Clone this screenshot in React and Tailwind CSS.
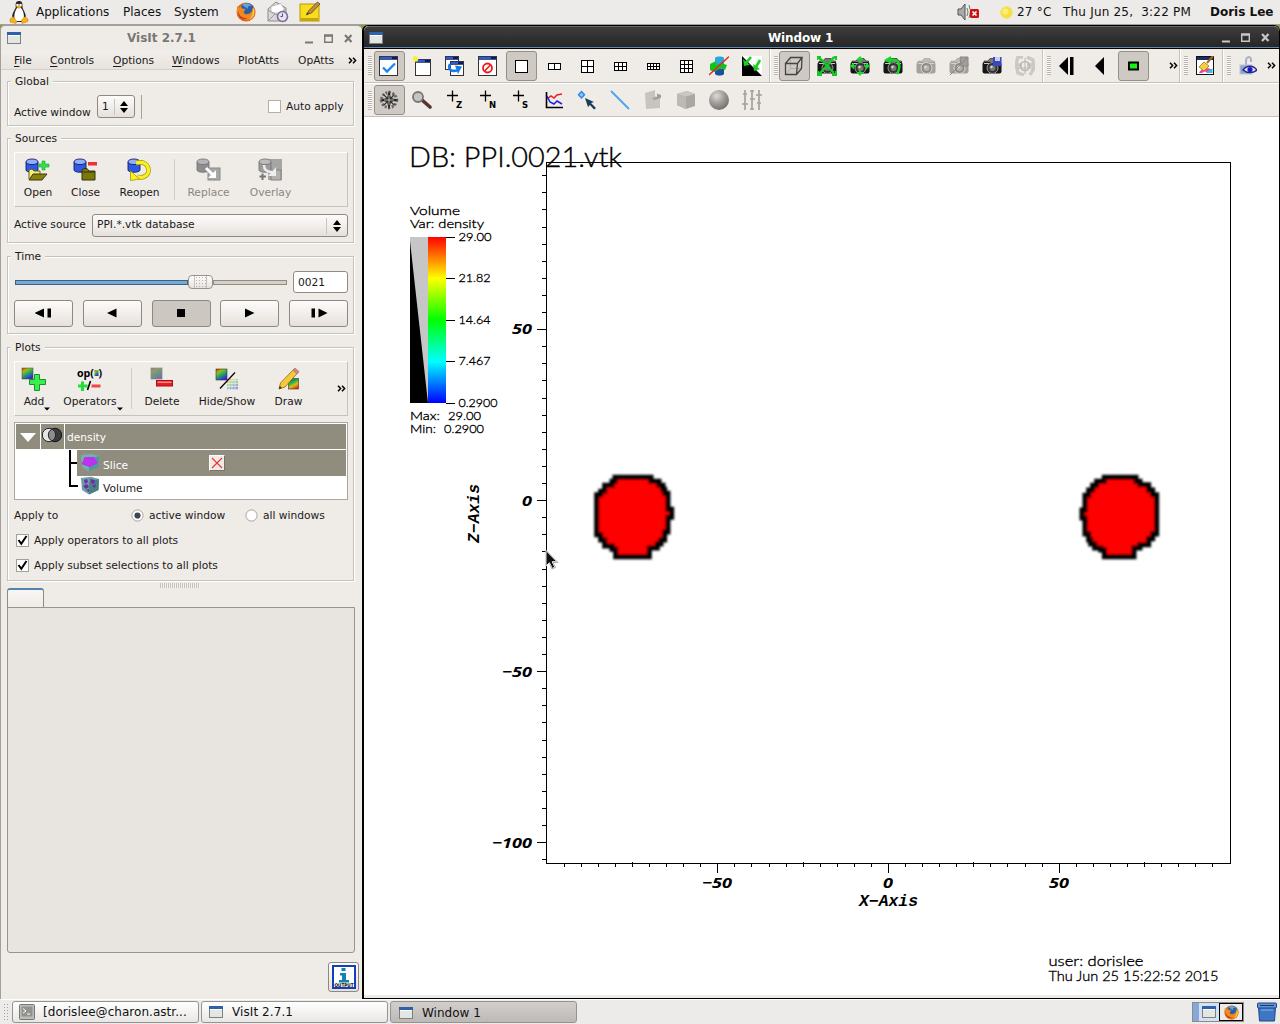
import React from "react";

const UI = "font-['DejaVu_Sans',sans-serif]";

/* ---------- small shared pieces ---------- */

const Svg = ({ s = 20, w, h, vb, children, className = "" }) => (
  <svg width={w || s} height={h || s} viewBox={vb || `0 0 ${w || s} ${h || s}`} className={`block shrink-0 ${className}`}>
    {children}
  </svg>
);

const Group = ({ title, className = "", children }) => (
  <section className={`ml-[6px] w-[347px] shrink-0 border border-[#c6c2bc] shadow-[1px_1px_0_#ffffff,inset_1px_1px_0_#ffffff] ${className}`}>
    <div className="-mt-[9px] ml-[3px] flex h-4 w-fit items-center bg-[#efebe7] px-1 pt-[2px]">{title}</div>
    {children}
  </section>
);

const Frame = ({ className = "", children }) => (
  <div className={`ml-[6px] flex h-[55px] w-[334px] border border-t-white border-r-[#c6c2bc] border-b-[#c6c2bc] border-l-white ${className}`}>
    {children}
  </div>
);

const Tool = ({ label, className, children, off, menu }) => (
  <div className={`flex shrink-0 flex-col items-center pt-[5px] ${className}`}>
    <div className="h-[25px]">{children}</div>
    <div className={`relative mt-[2px] flex h-[17px] items-center whitespace-nowrap ${off ? "text-[#8a8782]" : ""}`}>
      {label}
      {menu && (
        <svg className="absolute -right-[6px] bottom-0" width="6" height="4"><path d="M0 0.5H6L3 3.5Z" fill="#000" /></svg>
      )}
    </div>
  </div>
);

const More = ({ className = "" }) => (
  <Svg w={9} h={7} className={className}>
    <path d="M1 .8L3.6 3.5L1 6.2M5 .8L7.6 3.5L5 6.2" fill="none" stroke="#000" strokeWidth="1.5" />
  </Svg>
);

const UpDown = () => (
  <Svg w={8} h={12}><path d="M0 5L4 0L8 5ZM0 7H8L4 12Z" fill="#000" /></Svg>
);

const WinIcon = () => (
  <Svg w={14} h={12}>
    <rect x=".5" y=".5" width="13" height="11" fill="#e4e6e1" stroke="#7d8083" />
    <rect x="1" y="3" width="12" height="1" fill="#fff" />
    <rect width="14" height="3" fill="#2d62a8" />
  </Svg>
);

const WinButtons = ({ c }) => (
  <Svg w={56} h={12}>
    <path d="M4 10.500H12" stroke={c} strokeWidth="2" />
    <path d="M23.700 3H31.300V10.300H23.700ZM23 4H32" fill="none" stroke={c} strokeWidth="1.4" />
    <path d="M44 3L50.500 10M50.500 3L44 10" stroke={c} strokeWidth="2.2" />
  </Svg>
);

const BTN = "border border-[#8d8880] rounded-[3px] bg-linear-to-b from-[#fdfcfb] to-[#e6e0db]";

/* ---------- top panel icons ---------- */

const Tux = () => (
  <Svg w={20} h={24}>
    <path d="M10 1C6.500 1 6.500 4 6.800 7C6 10 3 13 3 18L6 22H14L17 18C17 13 14 10 13.500 7C13.700 3 13 1 10 1Z" fill="#222" />
    <path d="M8 8C5.500 12 4.500 16 6 21H14C16 16 14.500 11 12 8Z" fill="#fff" />
    <circle cx="8.500" cy="5" r="1.300" fill="#fff" /><circle cx="11.500" cy="5" r="1.300" fill="#fff" />
    <path d="M7 6.500L10 5.500L13 6.500L10 9Z" fill="#f6a91b" />
    <path d="M1 19L4 16.500L8 21.500L7 23.500L1 22ZM19 19L16 16.500L12.500 20L13 23.500L19 21.500Z" fill="#f7b11c" stroke="#c77f0c" strokeWidth=".5" />
  </Svg>
);

const Firefox = ({ s = 20 }) => (
  <Svg s={s} vb="0 0 20 20">
    <circle cx="10" cy="10" r="9.500" fill="#e0621a" />
    <circle cx="11" cy="8" r="7" fill="#2a5ea8" />
    <path d="M6 3C9 0 14 1 16 4C13 3 11 5 12 7Z" fill="#5fa3d8" />
    <path d="M1 4L3.500 6L5 4L6 6.500L9.500 7L8 9.500C7 11 9 13 12 12C15 11.500 16.500 9 16.500 6C19 9 18 14 15 16.500C10 20 3 18 1.500 12C.5 9 1 6 1 4Z" fill="#f08a1c" />
    <path d="M17 5C20 10 18 16 13 18C16 15 17 12 17 5Z" fill="#f9d63c" />
    <path d="M2 9C3 14 7 17 12 16C8 19 3 17 2 12Z" fill="#c8371a" />
  </Svg>
);

const Mail = () => (
  <Svg w={22} h={22}>
    <path d="M1 8L9 1L19 7V20H1Z" fill="#d8d8d6" stroke="#8b8b89" />
    <path d="M4 5.500L14 2.500L17 8V12H4Z" fill="#fff" stroke="#aaa" strokeWidth=".6" />
    <path d="M1 9L10 14L19 8M1 20L8 13" fill="none" stroke="#999" />
    <circle cx="15.500" cy="15.500" r="5" fill="#e8e2ee" stroke="#7e6a9c" strokeWidth="1.600" />
    <path d="M15.500 12.500V15.500H13.500" fill="none" stroke="#555" />
  </Svg>
);

const Note = () => (
  <Svg w={22} h={22}>
    <rect x="1" y="3" width="19" height="17" fill="#f7dd1d" stroke="#b79a05" />
    <rect x="2" y="17" width="17" height="3" fill="#c9a50a" />
    <path d="M8 13L10 9.500L18.500 1L21 3L12.500 12Z" fill="#c98b43" stroke="#5c4022" strokeWidth=".8" />
    <path d="M7 14.500L8 11.500L10 13Z" fill="#333" />
  </Svg>
);

const TopPanel = () => (
  <header className="flex h-[25px] shrink-0 items-center border-b border-[#a3a09c] bg-[#edebe9] text-[12px] text-[#111] whitespace-nowrap">
    <div className="ml-[9px] w-[27px]"><Tux /></div>
    <div className="w-[87px]">Applications</div>
    <div className="w-[51px]">Places</div>
    <div className="w-[62px]">System</div>
    <div className="w-[31px]"><Firefox /></div>
    <div className="w-[32px]"><Mail /></div>
    <Note />
    <div className="flex-1" />
    <Svg w={22} h={20}>
      <path d="M1 7H4L8 2V18L4 13H1Z" fill="#aaa" stroke="#555" />
      <path d="M10 6Q12 10 10 14M12 3Q15 9 12 16" fill="none" stroke="#777" />
      <rect x="13" y="7" width="9" height="9" rx="1.500" fill="#cc1111" />
      <path d="M15.500 9.500L19.500 13.500M19.500 9.500L15.500 13.500" stroke="#fff" strokeWidth="1.600" />
    </Svg>
    <Svg s={13} className="ml-[21px]"><circle cx="6.500" cy="6.500" r="6" fill="#f7dd3e" stroke="#f1e48c" /><circle cx="5.500" cy="5.500" r="3" fill="#fcef76" /></Svg>
    <div className="ml-[4px] w-[46px] tracking-[0.2px]">27 °C</div>
    <div className="w-[147px] tracking-[0.2px] whitespace-pre">Thu Jun 25,  3:22 PM</div>
    <div className="w-[70px] font-bold">Doris Lee</div>
  </header>
);

/* ---------- left window icons ---------- */

const Cyl = ({ a = "#2f58e4", b = "#8fb0ff", c = "#12205e" }) => (
  <>
    <path d="M1 4V12C1 15 13 15 13 12V4Z" fill={a} stroke={c} strokeWidth=".9" />
    <ellipse cx="7" cy="3.800" rx="6" ry="2.800" fill={b} stroke={c} strokeWidth=".9" />
  </>
);
const OpenIcon = () => (
  <Svg w={26} h={24}>
    <Cyl />
    <path d="M4 21V12L7 11L9 13H15V16" fill="#f5ee7a" stroke="#6a6410" />
    <path d="M4 22L8 16H22L17 22Z" fill="#85800f" stroke="#3c3905" />
    <path d="M17 3H20V6H24V9H20V12H17V9H14V6H17Z" fill="#35e04a" stroke="#17a52b" strokeWidth=".6" />
  </Svg>
);
const CloseIcon = () => (
  <Svg w={26} h={24}>
    <Cyl />
    <path d="M9 22V12L11 10.500H14L16 13H22V22Z" fill="#7b7808" stroke="#37350a" />
    <path d="M9 14H22" stroke="#37350a" />
    <rect x="15" y="4" width="9" height="3.500" fill="#ee3038" />
  </Svg>
);
const ReopenIcon = () => (
  <Svg w={26} h={24}>
    <Cyl />
    <path d="M9 5C16 3 21 6 21.500 11.500C22 18 15 21 9.500 18.500" fill="none" stroke="#a39b00" strokeWidth="4.600" />
    <path d="M9 5C16 3 21 6 21.500 11.500C22 18 15 21 9.500 18.500" fill="none" stroke="#fcee21" strokeWidth="3.200" />
    <path d="M3.500 22.500V13L12.500 21Z" fill="#fcee21" stroke="#a39b00" strokeWidth=".8" />
  </Svg>
);
const ReplaceIcon = () => (
  <Svg w={26} h={24}>
    <Cyl a="#8d8d8d" b="#b5b5b5" c="#777" />
    <rect x="12" y="10" width="12" height="12" fill="#a8a8a6" stroke="#8a8a88" />
    <path d="M10 10L17 17" stroke="#fff" strokeWidth="3" /><path d="M20 12V20H12Z" fill="#fff" />
  </Svg>
);
const OverlayIcon = () => (
  <Svg w={26} h={24}>
    <rect x="10" y="1" width="14" height="21" fill="#a5a5a3" />
    <Cyl a="#9c9c9c" b="#bcbcbc" c="#777" />
    <rect x="13" y="12" width="10" height="10" fill="#b2b2b0" stroke="#858583" />
    <path d="M6 7C6 12 9 14 14 14" fill="none" stroke="#eee" strokeWidth="2.400" /><path d="M18 9V18H10Z" fill="#eee" />
    <path d="M4.500 15.500V22M1.500 18.500H8" stroke="#777" strokeWidth="2" />
  </Svg>
);

const RainbowDefs = () => (
  <svg width="0" height="0" className="absolute">
    <defs>
      <linearGradient id="rb3" x1="0" y1="0" x2=".6" y2="1">
        <stop offset="0" stopColor="#e82a0c" /><stop offset=".3" stopColor="#9ac010" /><stop offset=".6" stopColor="#20a860" /><stop offset="1" stopColor="#4020e8" />
      </linearGradient>
      <linearGradient id="rb4" x1=".2" y1="0" x2=".7" y2="1">
        <stop offset="0" stopColor="#1840e0" /><stop offset=".35" stopColor="#18b048" /><stop offset=".65" stopColor="#d8c010" /><stop offset="1" stopColor="#e83010" />
      </linearGradient>
    </defs>
  </svg>
);

const PlusShape = ({ t }) => (
  <path transform={t} d="M5 0H10V5H16V10H10V16H5V10H0V5H5Z" fill="#3bee4c" stroke="#15952a" />
);
const AddIcon = () => (
  <Svg w={26} h={25}><rect x="1" y="1" width="11" height="11" fill="url(#rb3)" stroke="#444" strokeWidth=".5" /><PlusShape t="translate(8.500 7.500)" /></Svg>
);
const OpIcon = () => (
  <Svg w={28} h={25}>
    <rect x="18.500" y="3" width="4" height="6" fill="url(#rb3)" />
    <text x="1" y="10" fontSize="10.500" fontWeight="bold" textLength="17" lengthAdjust="spacingAndGlyphs" fontFamily="Open Sans, sans-serif">op(</text>
    <text x="22.500" y="10" fontSize="10.500" fontWeight="bold" fontFamily="Open Sans, sans-serif">)</text>
    <path d="M5 14.500H8V17.500H11.500V20.500H8V24H5V20.500H2V17.500H5Z" fill="#22dd3a" />
    <path d="M11.500 23L14.500 14" stroke="#000" strokeWidth="1.600" />
    <rect x="15.500" y="17.500" width="9" height="3" fill="#f0464a" />
  </Svg>
);
const DeleteIcon = () => (
  <Svg w={26} h={25}>
    <rect x="2" y="1" width="11" height="11" fill="url(#rb3)" /><rect x="1.500" y=".5" width="12" height="12" fill="#8a8f8c" opacity=".75" />
    <rect x="7.500" y="13.500" width="16" height="5.500" fill="#ee1c20" stroke="#a41014" /><rect x="8.500" y="14.500" width="14" height="1.500" fill="#f98a8a" />
  </Svg>
);
const HideIcon = () => (
  <Svg w={26} h={25}>
    <rect x="2" y="2" width="11" height="11" fill="url(#rb3)" stroke="#333" strokeWidth=".6" />
    <rect x="13" y="12" width="11" height="11" fill="url(#rb3)" opacity=".45" />
    <path d="M13 13.500H24M13 16.500H24M13 19.500H24M13 22.500H24M15 12V23M18 12V23M21 12V23" stroke="#eee" strokeWidth=".7" />
    <path d="M6 21.500L21 5.500" stroke="#000" strokeWidth="1.200" />
  </Svg>
);
const DrawIcon = () => (
  <Svg w={26} h={25}>
    <rect x="12.500" y="11.500" width="10" height="10.500" fill="url(#rb4)" stroke="#333" strokeWidth=".6" />
    <path d="M3 22L4.500 16L18 2L22 5.500L9 20Z" fill="#f5c93c" stroke="#9c7414" strokeWidth=".9" />
    <path d="M17 3L19 1L23 4.500L21 7Z" fill="#e08088" stroke="#777" strokeWidth=".6" />
    <path d="M3 22L3.800 19L5.800 21Z" fill="#222" />
  </Svg>
);
const CubeIcon = ({ vol }) => (
  <Svg w={20} h={20}>
    <path d="M1 2L11 .8L19 3L18.500 14L9 18.500L2 14Z" fill={vol ? "#6f9da4" : "#74aeb0"} />
    <path d="M9 6V18.500L18.500 14L19 3Z" fill={vol ? "#4b8084" : "#4f989b"} />
    {vol
      ? <path d="M4 4L7 3L8 6L5 8ZM10 3L15 4L14 8L11 7ZM3 10L7 8L9 11L6 13ZM12 10L16 8L15 12ZM6 14L9 13V16Z" fill="#6a2fa8" />
      : <><path d="M2 11L5 4L9 7L10 14Z" fill="#b0139f" /><path d="M5 4H14L18 10L10 14L2 11Z" fill="#bb33f0" /></>}
  </Svg>
);

const Check = () => (
  <span className="flex h-[13px] w-[13px] items-center justify-center border border-[#a59f98] bg-white">
    <Svg s={11}><path d="M1.500 5L4.300 8.800L9.500 1" fill="none" stroke="#000" strokeWidth="2" /></Svg>
  </span>
);
const Radio = ({ on }) => (
  <Svg s={13}>
    <circle cx="6.500" cy="6.500" r="5.600" fill="#fff" stroke="#a8a29b" />
    {on && <circle cx="6.500" cy="6.500" r="3.100" fill="#3d4750" />}
  </Svg>
);

const PB = ({ d, on }) => (
  <div className={`flex h-[27px] w-[59px] items-center justify-center pb-px ${on ? "rounded-[3px] border border-[#8d8880] bg-[#cdc7c1]" : BTN}`}>
    <Svg w={18} h={10}><path d={d} fill="#000" /></Svg>
  </div>
);

const MenuItem = ({ w, children, u = true }) => (
  <div className={`shrink-0 pt-[3px] ${w}`}>
    {u ? <><span className="underline underline-offset-2">{children[0]}</span>{children.slice(1)}</> : children}
  </div>
);

const ControlWindow = () => (
  <div className="flex w-[362px] shrink-0 flex-col rounded-t-[5px] border-t border-l border-[#a3a09c] bg-[#efebe7] text-[10.67px] leading-none text-[#1a1a1a] whitespace-nowrap">
    <div className="flex h-[24px] items-center pl-[6px]">
      <WinIcon />
      <div className="ml-[43px] w-[194px] pl-[63px] text-[12px] font-bold text-[#7a7774]">VisIt 2.7.1</div>
      <div className="ml-[43px]"><WinButtons c="#7a7774" /></div>
    </div>
    <div className="flex h-[20px] items-center border-b border-[#d3cec9] bg-linear-to-b from-[#f1eeeb] to-[#e8e3de] pl-[13px]">
      <MenuItem w="w-[36px]">File</MenuItem>
      <MenuItem w="w-[63px]">Controls</MenuItem>
      <MenuItem w="w-[59px]">Options</MenuItem>
      <MenuItem w="w-[66px]">Windows</MenuItem>
      <MenuItem w="w-[60px]" u={false}>PlotAtts</MenuItem>
      <MenuItem w="w-[50px]" u={false}>OpAtts</MenuItem>
      <More className="mt-px" />
    </div>

    <Group title="Global" className="mt-[11px] h-[45px]">
      <div className="flex pl-[6px] pt-[6px]">
        <div className="w-[83px] pt-[13px]">Active window</div>
        <div className={`flex h-[23px] w-[38px] items-center ${BTN}`}>
          <span className="w-[15px] pt-[2px] pl-[4px]">1</span>
          <span className="ml-[1px] mr-[5px] h-4 w-px bg-[#c9c4be]" />
          <UpDown />
        </div>
        <div className="ml-[6px] h-[24px] w-px bg-[#a5a09a]" />
        <div className="ml-[126px] mt-[5px] h-[13px] w-[13px] border border-[#b5afa8] bg-white" />
        <div className="ml-[5px] pt-[7px]">Auto apply</div>
      </div>
    </Group>

    <Group title="Sources" className="mt-[12px] h-[105px]">
      <Frame className="mt-[6px]">
        <Tool label="Open" className="w-[46px]"><OpenIcon /></Tool>
        <Tool label="Close" className="w-[49px]"><CloseIcon /></Tool>
        <Tool label="Reopen" className="w-[59px]"><ReopenIcon /></Tool>
        <div className="ml-[5px] mt-[6px] h-[41px] w-px bg-[#d2cdc8]" />
        <Tool off label="Replace" className="w-[67px]"><ReplaceIcon /></Tool>
        <Tool off label="Overlay" className="w-[57px]"><OverlayIcon /></Tool>
      </Frame>
      <div className="ml-[6px] mt-[7px] flex h-[23px] items-center">
        <div className="w-[78px]">Active source</div>
        <div className={`flex h-[23px] w-[256px] items-center ${BTN}`}>
          <div className="flex-1 pl-[4px]">PPI.*.vtk database</div>
          <div className="mr-[6px] h-4 w-px bg-[#c9c4be]" />
          <UpDown />
          <div className="w-[6px]" />
        </div>
      </div>
    </Group>

    <Group title="Time" className="mt-[13px] h-[78px]">
      <div className="ml-[7px] mt-[7px] flex h-[22px] items-center">
        <div className="h-[5px] w-[173px] border border-[#3b6283] bg-[#76a9d8]" />
        <div className="flex h-[14px] w-[25px] items-center justify-center rounded-[4px] border border-[#96918a] bg-linear-to-b from-white to-[#e6e1dc]">
          <div className="h-[12px] w-[13px] border-x border-[#c6c1bb] bg-[radial-gradient(circle,#b5b0aa_0.7px,transparent_1px)] bg-[size:3px_3px]" />
        </div>
        <div className="h-[5px] w-[74px] border border-[#938c82] bg-[#d6cfc5]" />
        <div className="ml-[6px] flex h-[22px] w-[55px] items-center rounded-[3px] border border-[#938c85] bg-white pt-[2px] pl-[4px]">0021</div>
      </div>
      <div className="ml-[6px] mt-[7px] flex w-[334px] justify-between">
        <PB d="M-.5 5L9 .5V9.500ZM12.500 .5H16V9.500H12.500Z" />
        <PB d="M4 5L13.500 .5V9.500Z" />
        <PB on d="M5 1H13V9H5Z" />
        <PB d="M13.500 5L4 .5V9.500Z" />
        <PB d="M17.500 5L8.500 .5V9.500ZM1.500 .5H5V9.500H1.500Z" />
      </div>
    </Group>

    <Group title="Plots" className="mt-[13px] h-[234px]">
      <Frame className="mt-[6px]">
        <Tool menu label="Add" className="w-[38px]"><AddIcon /></Tool>
        <Tool menu label="Operators" className="w-[74px]"><OpIcon /></Tool>
        <div className="ml-[4px] mt-[6px] h-[41px] w-px bg-[#d2cdc8]" />
        <Tool label="Delete" className="w-[60px]"><DeleteIcon /></Tool>
        <Tool label="Hide/Show" className="w-[70px]"><HideIcon /></Tool>
        <Tool label="Draw" className="w-[53px]"><DrawIcon /></Tool>
        <More className="mt-[23px] ml-[22px]" />
      </Frame>
      <div className="ml-[6px] mt-[6px] h-[78px] w-[334px] border border-[#aba69f] bg-white p-px">
        <div className="flex h-[25px] gap-px text-white">
          <div className="flex w-[24px] items-center justify-center bg-[#918d7e]"><Svg w={16} h={10}><path d="M0 1H16L8 10Z" fill="#fff" /></Svg></div>
          <div className="flex w-[23px] justify-center bg-[#918d7e] pt-[3px] pr-[2px]">
            <Svg w={20} h={16}>
              <circle cx="13" cy="8" r="6.700" fill="#3b3b3b" stroke="#111" /><circle cx="7" cy="8" r="6.700" fill="#e6e6e6" stroke="#222" />
              <path d="M10 2A6.700 6.700 0 0 1 10 14A6.700 6.700 0 0 1 10 2Z" fill="#8d8d8d" stroke="#222" />
            </Svg>
          </div>
          <div className="flex flex-1 items-center bg-[#918d7e] pl-[2px] pt-[3px]">density</div>
        </div>
        <div className="flex h-[50px] pt-px">
          <div className="w-[61px] pl-[53px]">
            <Svg w={9} h={37}><path d="M1 0V36H9M1 13H9" fill="none" stroke="#000" strokeWidth="2" /></Svg>
          </div>
          <div className="flex-1">
            <div className="flex h-[26px] items-center bg-[#918d7e] text-white">
              <div className="ml-[3px]"><CubeIcon /></div>
              <div className="ml-[3px] w-[106px] pt-[6px]">Slice</div>
              <div className="flex h-[16px] w-[16px] items-center justify-center border border-white border-r-[#77736b] border-b-[#77736b] bg-[#efebe7]">
                <Svg s={12}><path d="M1 1L11 11M11 1L1 11" stroke="#e83a32" strokeWidth="1.200" /></Svg>
              </div>
            </div>
            <div className="flex h-[22px] items-center">
              <div className="ml-[3px] -mt-[2px]"><CubeIcon vol /></div>
              <div className="ml-[3px] pt-[5px]">Volume</div>
            </div>
          </div>
        </div>
      </div>
      <div className="ml-[6px] mt-[8px] flex h-[15px] items-center">
        <div className="w-[117px] pt-[2px]">Apply to</div><Radio on />
        <div className="ml-[5px] w-[96px] pt-[2px]">active window</div><Radio />
        <div className="ml-[5px] pt-[2px]">all windows</div>
      </div>
      <div className="ml-[8px] mt-[10px] flex h-[15px] items-center gap-[5px]"><Check /><span className="pt-[2px]">Apply operators to all plots</span></div>
      <div className="ml-[8px] mt-[10px] flex h-[15px] items-center gap-[5px]"><Check /><span className="pt-[2px] tracking-[-0.03px]">Apply subset selections to all plots</span></div>
    </Group>

    <div className="ml-[159px] mt-[2px] h-[5px] w-[40px] shrink-0 bg-[repeating-linear-gradient(90deg,#c5bfb8_0_1px,#f6f4f2_1px_2px)]" />
    <div className="ml-[6px] h-[20px] w-[37px] shrink-0 rounded-t-[3px] border border-b-0 border-[#8f8a84] border-t-2 border-t-[#5582ad] bg-linear-to-b from-[#f8f6f4] to-[#efebe7]" />
    <div className="ml-[6px] -mt-px h-[346px] w-[348px] shrink-0 rounded-b-[3px] border border-[#98938d] bg-[#e8e4e0]" />
    <div className={`ml-[327px] mt-[9px] flex h-[30px] w-[31px] shrink-0 items-center justify-center ${BTN}`}>
      <Svg w={24} h={24}>
        <rect x="1" y="1" width="22" height="22" fill="#fff" stroke="#1240b8" strokeWidth="2" />
        <path d="M9.500 3H13.500V6H9.500ZM8 8H14V15H17V17.500H7V15H10V10.500H8Z" fill="#1580b4" />
        <text x="2.500" y="21.800" fontSize="5" fontWeight="bold" textLength="19" lengthAdjust="spacingAndGlyphs" fontFamily="DejaVu Sans, sans-serif">OUTPUT</text>
      </Svg>
    </div>
  </div>
);

/* ---------- viewer toolbars ---------- */

const Cell = ({ on, children }) => (
  <div className="flex h-[31px] w-[33px] shrink-0 items-center justify-center">
    <div className={`flex h-[30px] w-[31px] items-center justify-center ${on ? "rounded-[3px] border border-[#96908a] bg-[#cfc9c4]" : ""}`}>
      <div className="-ml-px">{children}</div>
    </div>
  </div>
);

const Handle = ({ className = "" }) => (
  <div className={`h-[19px] w-[4px] shrink-0 bg-[repeating-linear-gradient(180deg,#b8b3ad_0_1px,#fbfaf9_1px_2px)] ${className}`} />
);

const Sep = () => <div className="h-[33px] w-[2px] shrink-0 border-l border-[#c6c1bb] bg-white" />;

const Pane = ({ x = 0, y = 0, w = 18, h = 19 }) => (
  <>
    <rect x={x + .5} y={y + .5} width={w} height={h - 1} fill="#fff" stroke="#333" />
    <rect x={x + .5} y={y + .5} width={w} height="3" fill="#2a5ae0" stroke="#333" strokeWidth=".7" />
    <path d={`M${x + w - 5} ${y + 2}H${x + w}`} stroke="#0a1a60" strokeWidth="2" />
  </>
);

const GridIcon = ({ c, r, w, h }) => (
  <Svg s={20}>
    <g shapeRendering="crispEdges" stroke="#000">
      <rect x={10.500 - w / 2} y={10.500 - h / 2} width={w} height={h} fill="#fff" />
      {Array.from({ length: c - 1 }, (_, i) => <path key={"c" + i} d={`M${10.500 - w / 2 + ((i + 1) * w) / c} ${10.500 - h / 2}v${h}`} />)}
      {Array.from({ length: r - 1 }, (_, i) => <path key={"r" + i} d={`M${10.500 - w / 2} ${10.500 - h / 2 + ((i + 1) * h) / r}h${w}`} />)}
    </g>
  </Svg>
);

const Camera = ({ off, children }) => {
  const k = off ? "#a3a19e" : "#151515";
  return (
    <Svg s={20}>
      <path d="M2 7V5H6L8 2.500H14L16 5H18.500V7Z" fill={off ? "#bbb9b6" : "#777"} stroke={k} strokeWidth=".6" />
      <rect x=".5" y="6" width="19" height="11.500" rx="2" fill={k} />
      <path d="M2 7.500H18" stroke={off ? "#d5d3d0" : "#c8c8c8"} />
      <circle cx="10.500" cy="12" r="5.500" fill={off ? "#8d8b88" : "#333"} stroke={off ? "#d8d6d3" : "#999"} />
      <circle cx="10.500" cy="12" r="3" fill={off ? "#b5b3b0" : "#777"} /><circle cx="9.500" cy="11" r="1.200" fill="#ddd" />
      {children}
    </Svg>
  );
};

const Locator = ({ l }) => (
  <Svg s={22}>
    <path d="M8.500 1.500V12.500M3 6.500H14" stroke="#000" strokeWidth="1.300" />
    <text x="12" y="19" fontSize="8.500" fontWeight="bold" fontFamily="DejaVu Sans, sans-serif">{l}</text>
  </Svg>
);

const Toolbars = () => (
  <>
    <div className="flex h-[34px] shrink-0 items-center border-b border-[#c6c1bb] bg-[#efebe7]">
      <Handle className="ml-[4px] mr-px" />
      <Cell on><Svg s={20}><Pane h={20} /><path d="M4 11.500L8 15.500L16 7.500" fill="none" stroke="#1f86f0" strokeWidth="2.400" /></Svg></Cell>
      <Cell><Svg s={20}><Pane x={3} y={3} w={15} h={17} /><circle cx="3.500" cy="3" r="2.800" fill="#f4f03a" /></Svg></Cell>
      <Cell><Svg s={20}><Pane w={13} h={14} /><Pane x={5} y={5} w={13} h={15} /><path d="M5 8C2.500 13 6 16 12 14.500" fill="none" stroke="#1a7ae8" strokeWidth="2.600" /><path d="M10 9.500L17 10.500L13 18Z" fill="#1a7ae8" /></Svg></Cell>
      <Cell><Svg s={20}><Pane h={20} /><circle cx="9.500" cy="12" r="4.500" fill="none" stroke="#f01818" strokeWidth="1.800" /><path d="M6.500 15L12.500 9" stroke="#f01818" strokeWidth="1.600" /></Svg></Cell>
      <Cell on><GridIcon c={1} r={1} w={12} h={12} /></Cell>
      <Cell><GridIcon c={2} r={1} w={12} h={6} /></Cell>
      <Cell><GridIcon c={2} r={2} w={12} h={12} /></Cell>
      <Cell><GridIcon c={3} r={2} w={12} h={8} /></Cell>
      <Cell><GridIcon c={4} r={2} w={12} h={6} /></Cell>
      <Cell><GridIcon c={3} r={3} w={12} h={12} /></Cell>
      <Cell>
        <Svg s={20}>
          <path d="M6 2C6 0 15 0 15 2V17C15 20 6 20 6 17Z" fill="#2aa8d8" /><path d="M6 13H15V18C13 20 8 20 6 18Z" fill="#1b4fa0" />
          <path d="M1 8L7 5V9L12 7L18 9L16 14L12 12L5 16L1 14Z" fill="#12c218" />
          <path d="M0 19L20 .5" stroke="#f02020" strokeWidth="1.300" />
        </Svg>
      </Cell>
      <Cell>
        <Svg s={20}>
          <rect width="20" height="20" fill="#fff" /><path d="M0 0L20 20H0Z" fill="#000" />
          <path d="M9 1L4 7M18 4L14 11" fill="none" stroke="#18d020" strokeWidth="2.600" /><path d="M1 3L8 9L2 10ZM11 8L18 13L12 15Z" fill="#18d020" />
        </Svg>
      </Cell>
      <Sep />
      <Handle className="ml-[3px]" />
      <Cell on>
        <Svg s={20}>
          <path d="M6.500 1.500V12.500L1.500 18.500M6.500 12.500H18" fill="none" stroke="#aaa5a0" strokeWidth=".8" />
          <path d="M1.500 7.500H13.500L12.500 18.500H1.500ZM1.500 7.500L6.500 1.500H18L13.500 7.500M18 1.500L17.500 12.500L12.500 18.500" fill="none" stroke="#444" strokeWidth="1.300" />
        </Svg>
      </Cell>
      <Cell><Camera><path d="M1 1L7 6L10 10L17 1M1 19L10 10L19 19M0 4V1H4M17 1H19V4M1 15V19H5M15 19H19V15" fill="none" stroke="#14c828" strokeWidth="2.400" /></Camera></Cell>
      <Cell><Camera><path d="M10 0L13.500 4H6.500ZM10 20L13.500 16H6.500ZM0 10L4 6.500V13.500ZM20 10L16 6.500V13.500Z" fill="#10e020" /><path d="M10 3V7M10 14V17M3 10H6M14 10H17" stroke="#10e020" strokeWidth="1.600" /></Camera></Cell>
      <Cell><Camera><path d="M6 4H11C17 5 18 11 14 18" fill="none" stroke="#14d824" strokeWidth="2.400" /><path d="M1 4L8 0V8Z" fill="#14d824" /></Camera></Cell>
      <Cell><Camera off /></Cell>
      <Cell><Camera off><path d="M11 1H19V10H12Z" fill="#a09e9b" stroke="#888" /><path d="M1 19L18 2" stroke="#888" /></Camera></Cell>
      <Cell><Camera><rect x="11" y="1" width="8.500" height="9" fill="#3a48c0" /><rect x="13" y="1" width="5" height="4" fill="#c9cdf0" /></Camera></Cell>
      <Cell>
        <Svg s={20}><path d="M8 1H3L1 8L3 17L9 19M12 1L18 4L19 12L15 19M1 9H7M12 9H20" fill="none" stroke="#cbc8c5" strokeWidth="3.400" /><circle cx="10" cy="10" r="4.500" fill="none" stroke="#bab7b4" strokeWidth="1.600" /><path d="M10 2V18M2 12H18" stroke="#bab7b4" /></Svg>
      </Cell>
      <Sep />
      <Handle className="ml-[3px]" />
      <Cell><Svg s={20}><path d="M2 10L11 1V19Z" fill="#000" /><rect x="13" y="1" width="3.500" height="18" fill="#000" /></Svg></Cell>
      <Cell><Svg s={20}><path d="M5 10L14 1V19Z" fill="#000" /></Svg></Cell>
      <Cell on><Svg s={20}><rect x="5" y="5.500" width="11" height="9" fill="#000" /><rect x="7" y="7.500" width="7" height="5" fill="#18f018" /></Svg></Cell>
      <More className="ml-[19px]" />
      <div className="w-px" />
      <Sep />
      <Handle className="ml-[3px]" />
      <div className="ml-[8px] mr-[8px]">
        <Svg w={18} h={20}>
          <rect x=".5" y=".5" width="17" height="18" fill="#fff" stroke="#111" /><rect x="1" y="1" width="16" height="3" fill="#1b2d66" />
          <path d="M3 17C5 12 13 11 16 14V17H12C10 15 8 15 6 17Z" fill="#f040a0" /><path d="M10 17C12 14 15 14 16.500 12V17Z" fill="#2ac4f0" />
          <path d="M17 0L11 7" stroke="#a8681c" strokeWidth="2" /><path d="M8 6L13 10L8 15L3 11Z" fill="#f0d040" stroke="#a07810" strokeWidth=".8" />
        </Svg>
      </div>
      <Sep />
      <Handle className="ml-[3px]" />
      <div className="ml-[8px] mr-[10px]">
        <Svg w={18} h={20}>
          <path d="M7 10V5C7 0 12 0 12 4V6" fill="none" stroke="#a8afc8" strokeWidth="2" />
          <rect x="1" y="9" width="12" height="9" fill="#8ea4cc" stroke="#bcc4d8" />
          <path d="M4 14C8 9 14 9 18 14C14 17.500 8 17.500 4 14Z" fill="#e8e8f4" stroke="#24248c" strokeWidth="1.400" /><circle cx="11" cy="13.500" r="2.600" fill="#1c1cc0" />
        </Svg>
      </div>
      <More />
    </div>
    <div className="flex h-[34px] shrink-0 items-center border-t border-b border-t-white border-b-[#c6c1bb] bg-[#efebe7]">
      <Handle className="ml-[4px] mr-px" />
      <Cell on>
        <Svg s={20}>
          <circle cx="10" cy="10" r="7.500" fill="#d8d2be" stroke="#6e6278" strokeDasharray="2 1.500" strokeWidth="3" />
          <path d="M10 0L12 8L20 10L12 12L10 20L8 12L0 10L8 8Z" fill="#222" /><path d="M4.500 4.500L15.500 15.500M15.500 4.500L4.500 15.500" stroke="#333" strokeWidth="1.200" /><path d="M10 5V15M5 10H15" stroke="#eee" strokeWidth=".7" />
        </Svg>
      </Cell>
      <Cell><Svg s={20}><path d="M10 10L18 17" stroke="#5a3430" strokeWidth="3.600" strokeLinecap="round" /><circle cx="6" cy="7" r="5" fill="#c4c4c2" stroke="#777" strokeWidth="1.800" /></Svg></Cell>
      <Cell><Locator l="Z" /></Cell>
      <Cell><Locator l="N" /></Cell>
      <Cell><Locator l="S" /></Cell>
      <Cell><Svg s={20}><path d="M2.500 2V17.500H19" fill="none" stroke="#000" strokeWidth="1.600" /><path d="M3 9L7 6L10 8L13 5L18 4" fill="none" stroke="#f02020" strokeWidth="1.500" /><path d="M3 6L6 12L10 14L13 11L18 14" fill="none" stroke="#2020e8" strokeWidth="1.500" /></Svg></Cell>
      <Cell><Svg s={20}><path d="M4.500 1.500L7.500 4.800L4.500 8L1.500 4.800Z" fill="#8cc6fa" stroke="#2c86e8" strokeWidth="1.400" /><path d="M8 8L17 12L14 13L19 18L17 19.500L13 15L11 17Z" fill="#1a3c5c" /></Svg></Cell>
      <Cell><Svg s={20}><path d="M1 1L19 19" stroke="#4aa2f0" strokeWidth="1.800" /></Svg></Cell>
      <Cell><Svg s={20}><path d="M2 3L12 0V6L17 8V18L3 19Z" fill="#c6c3c0" /><path d="M9 8L14 7V3.500L18 5V8L11 10Z" fill="#a09d9a" /></Svg></Cell>
      <Cell><Svg s={20}><path d="M1 4L11 1L19 4V16L10 19L1 15Z" fill="#a9a7a4" /><path d="M1 4L10 6.500V19L1 15Z" fill="#bbb9b6" /><path d="M1 4L11 1L19 4L10 6.500Z" fill="#c9c7c4" /></Svg></Cell>
      <Cell>
        <Svg s={20}><defs><radialGradient id="ball" cx=".38" cy=".3" r=".7"><stop offset="0" stopColor="#dedcda" /><stop offset=".5" stopColor="#a3a19e" /><stop offset="1" stopColor="#757370" /></radialGradient></defs><circle cx="10" cy="10" r="10" fill="url(#ball)" /></Svg>
      </Cell>
      <Cell><Svg s={20}><path d="M3 0V20M10 0V20M17 0V20" stroke="#9a9794" strokeWidth="1.500" /><path d="M0 14H6M1 4H5M8 9H13M8 1H12M8 19H12M14 5H20M15 13H19" stroke="#a5a29f" strokeWidth="1.500" /></Svg></Cell>
    </div>
  </>
);

/* ---------- plot ---------- */

const stair = (pts) => {
  let d = `M${pts[0][0]} ${pts[0][1]}`;
  for (const [x, y] of pts.slice(1)) d += `H${x}V${y}`;
  return d + "Z";
};
const BLOB_L = stair([[465, 52], [573, 64], [597, 76], [609, 88], [614, 100], [624, 148], [635, 172], [624, 216], [614, 240], [603, 252], [592, 264], [568, 290], [467, 268], [456, 258], [434, 240], [422, 224], [410, 104], [422, 94], [434, 76], [456, 64], [465, 52]]);
const BLOB_R = stair([[133, 52], [228, 64], [240, 74], [266, 90], [278, 104], [290, 222], [278, 236], [266, 254], [240, 264], [222, 290], [133, 270], [122, 264], [104, 252], [92, 240], [86, 222], [75, 174], [66, 150], [75, 106], [86, 90], [98, 76], [110, 64], [133, 52]]);

const VT = ({ x, y, s, len, children }) => (
  <text x={x} y={y} fontSize={s} textLength={len} lengthAdjust="spacingAndGlyphs" fontWeight="300" fontFamily="Lato, sans-serif" fill="#000" stroke="#000" strokeWidth=".35" style={{ whiteSpace: "pre" }}>{children}</text>
);
const Num = ({ x, y, len, children }) => (
  <text x={x} y={y} fontSize="15" textLength={len} lengthAdjust="spacingAndGlyphs" fontWeight="bold" fontStyle="italic" fontFamily="Open Sans, sans-serif">{children}</text>
);

const K = Array.from({ length: 40 }, (_, i) => i - 19);

const Plot = () => (
  <svg width="915" height="878" viewBox="364 117 915 878" className="block shrink-0 bg-white">
    <defs>
      <linearGradient id="bar" x1="0" y1="0" x2="0" y2="1">
        <stop offset="0" stopColor="#f00" /><stop offset=".25" stopColor="#ff0" /><stop offset=".5" stopColor="#0f0" /><stop offset=".75" stopColor="#0ff" /><stop offset="1" stopColor="#00f" />
      </linearGradient>
      <filter id="soft"><feGaussianBlur stdDeviation="2.6" /></filter>
    </defs>
    <VT x={409} y={167} s={28} len={213}>DB: PPI.0021.vtk</VT>
    <VT x={410} y={215} s={12.5} len={50}>Volume</VT>
    <VT x={410} y={228} s={12.5} len={74}>Var: density</VT>
    <rect x="410" y="237" width="18" height="166" fill="#c6c6c6" />
    <path d="M410 241L428 403H410Z" fill="#000" />
    <rect x="428" y="237" width="18" height="166" fill="url(#bar)" />
    {[[237, "29.00", 33], [278, "21.82", 32], [320, "14.64", 32], [361, "7.467", 32], [403, "0.2900", 39]].map(([y, t, l]) => (
      <g key={t}>
        <path d={`M446 ${y + .5}H455`} stroke="#000" />
        <VT x={458.5} y={y + 4} s={12.5} len={l}>{t}</VT>
      </g>
    ))}
    <VT x={410} y={420} s={12.5} len={30}>Max:</VT><VT x={448} y={420} s={12.5} len={33}>29.00</VT>
    <VT x={410} y={433} s={12.5} len={26}>Min:</VT><VT x={444} y={433} s={12.5} len={40}>0.2900</VT>

    <g fill="none" stroke="#000" shapeRendering="crispEdges">
      <path d="M546.5 162.500H1230.500V863.500H546.500Z" />
      {K.map((k) => {
        const y = Math.round(500.1 + 17.1 * k) + .5;
        return <path key={k} d={`M${(k % 10) ? 542 : 537} ${y}H546`} />;
      })}
      <path d="M542 859.500H546" />
      {K.filter((k) => k < 20).map((k) => {
        const x = Math.round(888 + 17.07 * k) + .5;
        const up = [-15, -5, 5, 15].includes(k);
        return <path key={k} d={`M${x} ${up ? 862 : 864}V${(k % 10) ? 867 : 873}`} />;
      })}
    </g>
    <Num x={512} y={334} len={20}>50</Num>
    <Num x={522} y={506} len={10}>0</Num>
    <Num x={502} y={677} len={30}>−50</Num>
    <Num x={492} y={848} len={40}>−100</Num>
    <Num x={702} y={888} len={30}>−50</Num>
    <Num x={883} y={888} len={10}>0</Num>
    <Num x={1049} y={888} len={20}>50</Num>
    <text x="859" y="906" fontSize="16" textLength="59" lengthAdjust="spacingAndGlyphs" fontWeight="bold" fontStyle="italic" fontFamily="Liberation Mono, monospace">X−Axis</text>
    <text transform="translate(478.500 543) rotate(-90)" fontSize="16" textLength="59" lengthAdjust="spacingAndGlyphs" fontWeight="bold" fontStyle="italic" fontFamily="Liberation Mono, monospace">Z−Axis</text>

    <g transform="translate(460 460) scale(.33333)"><path d={BLOB_L} fill="#f00" stroke="#000" strokeWidth="15" filter="url(#soft)" /></g>
    <g transform="translate(1060 460) scale(.33333)"><path d={BLOB_R} fill="#f00" stroke="#000" strokeWidth="15" filter="url(#soft)" /></g>

    <path d="M546 550.500V566L549.500 562.800L552.200 568.500L554.800 567.200L552.200 561.800H557Z" fill="#111" stroke="#fff" strokeWidth="1" />
    <path d="M546 550V566.500M549.500 563.500L552 569.200L555.500 567.500L553 562.500H558L546.500 551" fill="none" stroke="#666" strokeWidth=".5" />

    <VT x={1048.5} y={966} s={14.5} len={95}>user: dorislee</VT>
    <VT x={1048.5} y={981} s={14.5} len={170}>Thu Jun 25 15:22:52 2015</VT>
  </svg>
);

const ViewerWindow = () => (
  <div className="flex w-[918px] shrink-0 flex-col rounded-t-[6px] border border-l-2 border-black bg-[#edebe9]">
    <div className="flex h-[22px] shrink-0 items-center rounded-t-[5px] border-t border-b border-t-[#666] border-b-[#5f87b3] bg-linear-to-b from-[#3d3d3d] to-[#262626] pl-[5px] text-[12px] font-bold text-white">
      <div className="pt-px"><WinIcon /></div>
      <div className="ml-[379px] w-[450px] pt-px pl-[6px] tracking-[-0.15px]">Window 1</div>
      <div className="ml-[6px]"><WinButtons c="#c9c7c5" /></div>
    </div>
    <div className="h-px shrink-0 bg-black" />
    <Toolbars />
    <Plot />
  </div>
);

/* ---------- taskbar ---------- */

const Task = ({ icon, on, children, className = "" }) => (
  <div className={`flex h-[22px] w-[187px] shrink-0 items-center rounded-[3px] border border-[#96938f] text-[12px] whitespace-nowrap ${on ? "bg-linear-to-b from-[#d2cecb] to-[#bdb9b6]" : "bg-linear-to-b from-white to-[#e9e7e5]"} ${className}`}>
    {icon}
    {children}
  </div>
);

const Taskbar = () => (
  <footer className="flex h-[25px] shrink-0 items-center border-t border-white bg-[#edebe9] text-[#111]">
    <div className="ml-[3px] mr-[4px] h-[18px] w-[5px] bg-[radial-gradient(circle,#a5a29f_0.7px,transparent_1px)] bg-[size:3px_3px]" />
    <Task icon={
      <Svg w={16} h={16} className="ml-[6px] mr-[8px]"><rect x=".5" y=".5" width="15" height="15" rx="1" fill="#bcbcb8" stroke="#777" /><rect x="2.500" y="2.500" width="11" height="10" fill="#92928e" /><path d="M4 4.500L7 7L4 9M8 10H11" fill="none" stroke="#fff" /></Svg>
    }><span className="tracking-[0.04px]">[dorislee@charon.astr...</span></Task>
    <Task className="ml-[2px]" icon={<div className="ml-[7px] mr-[9px]"><WinIcon /></div>}><span className="tracking-[0.08px]">VisIt 2.7.1</span></Task>
    <Task on className="ml-[2px]" icon={<div className="ml-[8px] mr-[9px] pt-px"><WinIcon /></div>}><span className="pt-px">Window 1</span></Task>
    <div className="flex-1" />
    <div className="flex h-[20px] w-[52px] border border-[#8d8a87] bg-white">
      <div className="w-[6px] bg-[#86a9dc]" />
      <div className="flex w-[20px] items-center justify-center bg-[#d3e1f5] pr-px"><WinIcon /></div>
      <div className="flex flex-1 items-center justify-center border border-black bg-[#edebe9]"><Firefox s={15} /></div>
    </div>
    <Svg w={20} h={20} className="ml-[13px] mr-[3px]">
      <path d="M1.500 5H18.500L17.500 19H2.500Z" fill="#3f76c4" stroke="#1f4688" /><rect x=".5" y="1" width="19" height="5" rx="1" fill="#5f93d8" stroke="#1f4688" /><path d="M3 3.500H17" stroke="#1c3a6c" /><path d="M4 8H16" stroke="#84b0e8" />
    </Svg>
  </footer>
);

export default function App() {
  return (
    <div className={`flex h-[1024px] w-[1280px] flex-col overflow-hidden bg-[#8a9a45] ${UI}`}>
      <RainbowDefs />
      <TopPanel />
      <main className="flex h-[974px] shrink-0">
        <ControlWindow />
        <ViewerWindow />
      </main>
      <Taskbar />
    </div>
  );
}
